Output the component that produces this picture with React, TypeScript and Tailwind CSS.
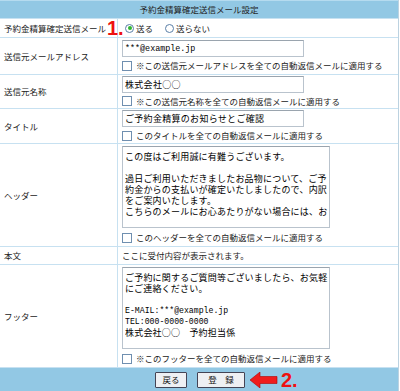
import React from "react";

const jp = { fontFamily: '"Noto Sans CJK JP", "Noto Sans", sans-serif' };
const mono = { fontFamily: '"Liberation Mono", "Noto Sans CJK JP", monospace' };

function Check({ label }: { label: string }) {
  return (
    <label className="flex items-center gap-[4px] h-[13px] text-[8.5px] leading-none text-[#222]">
      <span className="inline-block w-[10px] h-[10px] border border-[#6f8fb0] bg-white shrink-0" />
      <span>{label}</span>
    </label>
  );
}

function Input({ value, latin }: { value: string; latin?: boolean }) {
  return (
    <input
      readOnly
      value={value}
      style={latin ? mono : jp}
      className={`w-[182px] h-[17px] border border-[#b9c3cd] border-t-[#9aa4ae] px-[2px] ${latin ? "text-[8.4px]" : "text-[9px] tracking-[0.3px]"} text-black bg-white outline-none`}
    />
  );
}

function Area({ lines }: { lines: { t: string; latin?: boolean }[] }) {
  return (
    <div
      role="textbox"
      className="w-[208px] h-[82px] border border-[#b9c3cd] border-t-[#9aa4ae] pl-[2px] pr-[1px] pt-[4px] text-black bg-white overflow-hidden flex flex-col"
    >
      {lines.map((l, i) => (
        <div
          key={i}
          className={`h-[11px] leading-[11px] whitespace-pre overflow-hidden ${l.latin ? "text-[8.2px]" : "text-[9px] tracking-[0.2px]"}`}
          style={l.latin ? mono : jp}
        >
          {l.t}
        </div>
      ))}
    </div>
  );
}

function Row({ label, h, children }: { label: string; h: string; children: React.ReactNode }) {
  return (
    <div className={`grid grid-cols-[117px_1fr] gap-px ${h}`}>
      <div className="bg-white flex items-center pl-[4px] text-[8.5px] text-[#222]">{label}</div>
      <div className="bg-white flex flex-col justify-center pl-[4px]">{children}</div>
    </div>
  );
}

export default function App() {
  return (
    <div style={jp} className="w-[400px] h-[391px] bg-white overflow-hidden">
      <div className="relative w-[399px] flex flex-col gap-px bg-[#c7e1f1] border-r border-[#bcd2e0]">
        <div className="h-[18px] bg-[#92c8e4] border-t border-[#b5dbef] flex items-center justify-center text-[8.5px] text-[#222]">
          予約金精算確定送信メール設定
        </div>
        <Row label="予約金精算確定送信メール" h="h-[18px]">
          <div className="flex items-center text-[8.5px] text-[#222] pl-[3px]">
            <span className="inline-flex items-center justify-center w-[9px] h-[9px] rounded-full border border-[#5a7fa8] bg-white mr-[2px]">
              <span className="w-[4px] h-[4px] rounded-full bg-[#2fb52f]" />
            </span>
            <span>送る</span>
            <span className="inline-block w-[9px] h-[9px] rounded-full border border-[#5a7fa8] bg-white ml-[12px] mr-[2px]" />
            <span>送らない</span>
          </div>
        </Row>
        <Row label="送信元メールアドレス" h="h-[36px]">
          <Input value="***@example.jp" latin />
          <div className="mt-[2px]"><Check label="※この送信元メールアドレスを全ての自動返信メールに適用する" /></div>
        </Row>
        <Row label="送信元名称" h="h-[33px]">
          <Input value="株式会社○○" />
          <div className="mt-[2px]"><Check label="※この送信元名称を全ての自動返信メールに適用する" /></div>
        </Row>
        <Row label="タイトル" h="h-[34px]">
          <Input value="ご予約金精算のお知らせとご確認" />
          <div className="mt-[2px]"><Check label="このタイトルを全ての自動返信メールに適用する" /></div>
        </Row>
        <Row label="ヘッダー" h="h-[102px]">
          <Area
            lines={[
              { t: "この度はご利用誠に有難うございます。" },
              { t: " " },
              { t: "過日ご利用いただきましたお品物について、ご予" },
              { t: "約金からの支払いが確定いたしましたので、内訳" },
              { t: "をご案内いたします。" },
              { t: "こちらのメールにお心あたりがない場合には、お" },
            ]}
          />
          <div className="mt-[3px]"><Check label="このヘッダーを全ての自動返信メールに適用する" /></div>
        </Row>
        <Row label="本文" h="h-[17px]">
          <div className="text-[8.5px] text-[#222]">ここに受付内容が表示されます。</div>
        </Row>
        <Row label="フッター" h="h-[102px]">
          <Area
            lines={[
              { t: "ご予約に関するご質問等ございましたら、お気軽" },
              { t: "にご連絡ください。" },
              { t: " " },
              { t: "E-MAIL:***@example.jp", latin: true },
              { t: "TEL:000-0000-0000", latin: true },
              { t: "株式会社○○　予約担当係" },
            ]}
          />
          <div className="mt-[3px]"><Check label="※このフッターを全ての自動返信メールに適用する" /></div>
        </Row>
        <div className="h-[23px] bg-[#92c8e4] flex items-center pl-[155px]">
          <button className="w-[32px] h-[16px] border border-[#445] bg-[#eef0f3] text-[8.5px] text-[#111] leading-none rounded-[1px]">戻る</button>
          <button className="ml-[10px] w-[48px] h-[16px] border border-[#445] bg-[#eef0f3] text-[8.5px] text-[#111] leading-none rounded-[1px]">登　録</button>
          <svg width="28" height="16" viewBox="0 0 28 16" className="ml-[5px]">
            <polygon points="0,8 10,0 10,4.5 27,4.5 27,11.5 10,11.5 10,16" fill="#ef1c1c" stroke="#b00000" strokeWidth="0.6" />
          </svg>
          <span className="ml-[3px] text-[20px] font-bold text-[#ee1111] leading-none" style={{ fontFamily: '"Liberation Sans", sans-serif' }}>2.</span>
        </div>
        <span className="absolute left-[107px] top-[18px] text-[20px] font-bold text-[#ee1111] leading-none" style={{ fontFamily: '"Liberation Sans", sans-serif' }}>1.</span>
      </div>
    </div>
  );
}
